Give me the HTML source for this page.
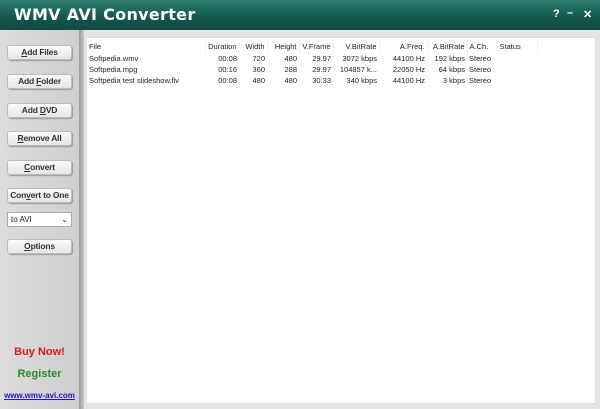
<!DOCTYPE html>
<html><head><style>
*{margin:0;padding:0;box-sizing:border-box}
body{width:600px;height:409px;overflow:hidden;background:#e4e4e4;font-family:"Liberation Sans",sans-serif;position:relative}
#title{position:absolute;left:0;top:0;width:600px;height:30px;background:linear-gradient(#2b7d70,#14574c 60%,#0f4b41)}
#title h1{position:absolute;left:14px;top:5px;color:#fff;font-size:16px;font-weight:bold;letter-spacing:0.3px;font-family:"DejaVu Sans",sans-serif}
.tb{position:absolute;top:8px;color:#fff;font-size:11px;font-weight:bold}
#left{position:absolute;left:0;top:30px;width:79px;height:379px;background:linear-gradient(90deg,#dcdcdc,#cfcfcf)}
#sep{position:absolute;left:79px;top:30px;width:5px;height:379px;background:linear-gradient(90deg,#9c9c9c,#c8c8c8)}
.btn{position:absolute;left:7px;width:65px;height:15px;background:linear-gradient(#fafafa,#e6e6e6);border:1px solid #bcbcbc;border-radius:3px;box-shadow:1px 1px 1px #999;font-size:8.5px;font-weight:bold;color:#333;text-align:center;line-height:13px;white-space:nowrap;letter-spacing:-0.2px}
.btn u{text-decoration:underline}
#sel{position:absolute;left:7px;top:212px;width:65px;height:15px;background:#fff;border:1px solid #aaa;font-size:8px;line-height:13px;padding-left:3px;color:#222}
#sel span{position:absolute;right:3px;top:0;font-size:8px}
#list{position:absolute;left:86px;top:37px;width:510px;height:367px;background:#fff;border:1px solid #ddd}
table{border-collapse:collapse;font-size:7.5px;color:#222;position:absolute;left:0;top:2px}
th{font-weight:normal;height:13px;border-right:1px solid #f0f0f0;padding:0 2px;white-space:nowrap}
td{height:11px;padding:0 2px;white-space:nowrap}
.r{text-align:right}
.l{text-align:left}
</style></head><body>
<div id="title"><h1>WMV AVI Converter</h1>
<div class="tb" style="left:553px">?</div><div class="tb" style="left:567px;top:7px">–</div><div class="tb" style="left:583px">✕</div></div>
<div id="left"></div><div id="sep"></div>
<div class="btn" style="top:45px"><u>A</u>dd Files</div>
<div class="btn" style="top:74px">Add <u>F</u>older</div>
<div class="btn" style="top:103px">Add <u>D</u>VD</div>
<div class="btn" style="top:131px"><u>R</u>emove All</div>
<div class="btn" style="top:160px"><u>C</u>onvert</div>
<div class="btn" style="top:188px">Con<u>v</u>ert to One</div>
<div id="sel">to AVI<span>⌄</span></div>
<div class="btn" style="top:239px"><u>O</u>ptions</div>
<div style="position:absolute;left:0;width:79px;top:346px;text-align:center;color:#e01818;font-weight:bold;font-size:11px">Buy Now!</div>
<div style="position:absolute;left:0;width:79px;top:368px;text-align:center;color:#2a8a2a;font-weight:bold;font-size:11px">Register</div>
<div style="position:absolute;left:0;width:79px;top:391px;text-align:center;color:#1a1acc;font-weight:bold;font-size:8px;text-decoration:underline">www.wmv-avi.com</div>
<div id="list"><table>
<tr><th class="l" style="width:118px">File</th><th class="r" style="width:34px">Duration</th><th class="r" style="width:28px">Width</th><th class="r" style="width:32px">Height</th><th class="r" style="width:34px">V.Frame</th><th class="r" style="width:46px">V.BitRate</th><th class="r" style="width:48px">A.Freq.</th><th class="r" style="width:40px">A.BitRate</th><th class="l" style="width:30px">A.Ch.</th><th class="l" style="width:40px">Status</th></tr>
<tr><td>Softpedia.wmv</td><td class="r">00:08</td><td class="r">720</td><td class="r">480</td><td class="r">29.97</td><td class="r">3072 kbps</td><td class="r">44100 Hz</td><td class="r">192 kbps</td><td>Stereo</td><td></td></tr>
<tr><td>Softpedia.mpg</td><td class="r">00:16</td><td class="r">360</td><td class="r">288</td><td class="r">29.97</td><td class="r">104857 k...</td><td class="r">22050 Hz</td><td class="r">64 kbps</td><td>Stereo</td><td></td></tr>
<tr><td>Softpedia test slideshow.flv</td><td class="r">00:08</td><td class="r">480</td><td class="r">480</td><td class="r">30.33</td><td class="r">340 kbps</td><td class="r">44100 Hz</td><td class="r">3 kbps</td><td>Stereo</td><td></td></tr>
</table></div>
</body></html>
